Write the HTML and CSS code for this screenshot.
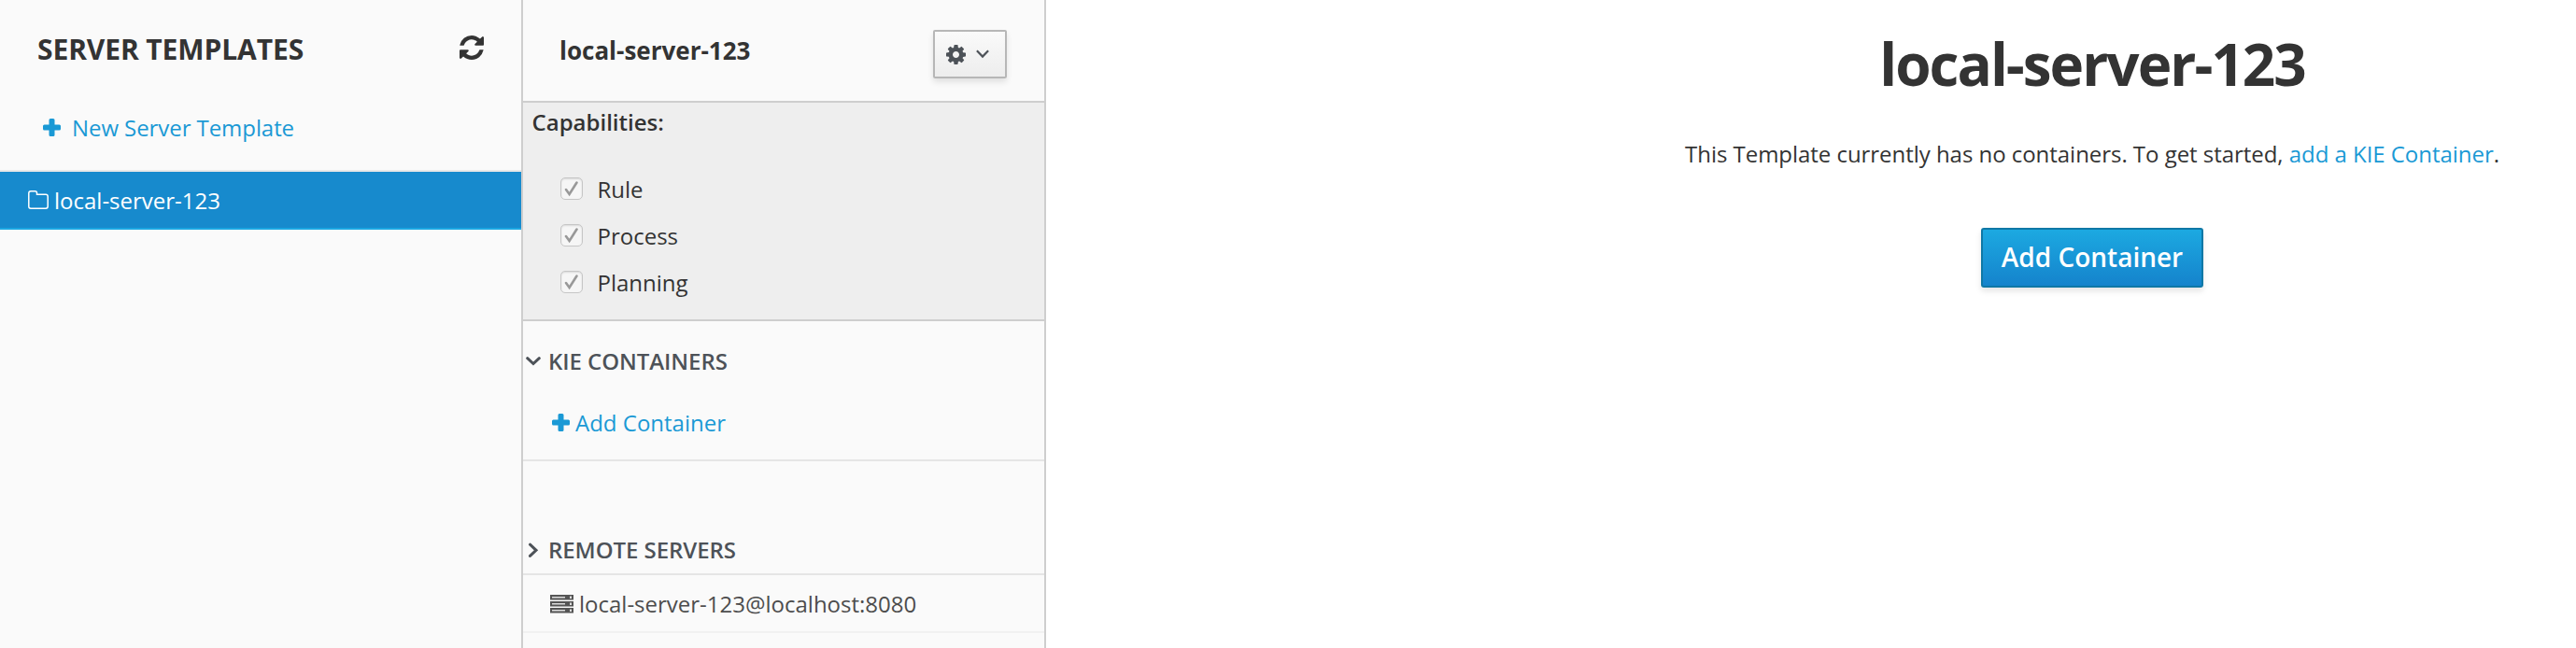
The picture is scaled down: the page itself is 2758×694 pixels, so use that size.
FILE: index.html
```html
<!DOCTYPE html>
<html lang="en">
<head>
<meta charset="utf-8">
<title>Server Templates</title>
<link rel="stylesheet" href="styles.css">
</head>
<body>
<div class="app">
  <aside class="templates">
    <header class="templates-header">
      <h2 class="templates-title">SERVER TEMPLATES</h2>
      <svg class="icon-refresh" width="26" height="26" viewBox="0 0 1536 1536"><path fill="#333" d="M1511 928q0 5-1 7-64 268-268 434.500T764 1536q-146 0-282.500-55T238 1324l-129 129q-19 19-45 19t-45-19-19-45V960q0-26 19-45t45-19h448q26 0 45 19t19 45-19 45l-137 137q71 66 161 102t187 36q134 0 250-65t186-179q11-17 53-117 8-23 30-23h192q13 0 22.500 9.500t9.500 22.500zm25-800v448q0 26-19 45t-45 19h-448q-26 0-45-19t-19-45 19-45l138-138Q969 256 768 256q-134 0-250 65T332 500q-11 17-53 117-8 23-30 23H50q-13 0-22.500-9.500T18 608v-7q65-268 270-434.500T768 0q146 0 284 55.500T1297 212l130-129q19-19 45-19t45 19 19 45z"/></svg>
    </header>
    <a class="link new-template">
      <svg width="19" height="19" viewBox="0 0 19 19"><path fill="#1a99d5" d="M8 0h3q1.500 0 1.500 1.500v5h5q1.500 0 1.500 1.500v3q0 1.500-1.500 1.500h-5v5q0 1.500-1.500 1.500h-3q-1.500 0-1.500-1.500v-5h-5Q0 12.500 0 11v-3q0-1.500 1.500-1.500h5v-5Q6.500 0 8 0z"/></svg>
      <span>New Server Template</span>
    </a>
    <div class="template-item">
      <svg width="22" height="20" viewBox="0 0 22 20"><path fill="none" stroke="#fff" stroke-width="1.500" d="M3 .8h4.500q2 0 2 2v1.500H19q2.200 0 2.200 2.200V17q0 2.200-2.200 2.200H3Q.8 19.200.8 17V3Q.8.8 3 .8z"/></svg>
      <span>local-server-123</span>
    </div>
  </aside>
  <section class="detail">
    <header class="detail-header">
      <h3 class="detail-title">local-server-123</h3>
      <button class="menu-button" type="button">
        <svg width="21" height="21" viewBox="0 0 1536 1536"><path fill="#4d5258" d="M1024 768q0-106-75-181t-181-75-181 75-75 181 75 181 181 75 181-75 75-181zm512-109v222q0 12-8 23t-20 13l-185 28q-19 54-39 91 35 50 107 138 10 12 10 25t-9 23q-27 37-99 108t-94 71q-12 0-26-9l-138-108q-44 23-91 38-16 136-29 186-7 28-36 28H657q-14 0-24.500-8.500T621 1506l-28-184q-49-16-90-37l-141 107q-10 9-25 9-14 0-25-11-126-114-165-168-7-10-7-23 0-12 8-23 15-21 51-66.500t54-70.500q-27-50-41-99L29 913q-13-2-21-12.500T0 877V655q0-12 8-23t19-13l186-28q14-46 39-92-40-57-107-138-10-12-10-24 0-10 9-23 26-36 98.500-107.500T337 135q13 0 26 10l138 107q44-23 91-38 16-136 29-186 7-28 36-28h222q14 0 24.500 8.500T915 30l28 184q49 16 90 37l142-107q9-9 24-9 13 0 25 10 129 119 165 170 7 8 7 22 0 12-8 23-15 21-51 66.500t-54 70.500q26 50 41 98l183 28q13 2 21 12.500t8 23.500z"/></svg>
        <svg width="14" height="10" viewBox="0 0 14 10"><path fill="none" stroke="#4d5258" stroke-width="2.200" d="M.9 1.300 7 7.600l6.100-6.300"/></svg>
      </button>
    </header>
    <div class="capabilities">
      <div class="capabilities-label">Capabilities:</div>
      <div class="capability"><i class="checkbox"><svg width="16" height="18" viewBox="0 0 16 18"><path fill="none" stroke="#999" stroke-width="2.600" stroke-linecap="round" d="m2 10 3.600 5L13.500 2.500"/></svg></i><span>Rule</span></div>
      <div class="capability"><i class="checkbox"><svg width="16" height="18" viewBox="0 0 16 18"><path fill="none" stroke="#999" stroke-width="2.600" stroke-linecap="round" d="m2 10 3.600 5L13.500 2.500"/></svg></i><span>Process</span></div>
      <div class="capability"><i class="checkbox"><svg width="16" height="18" viewBox="0 0 16 18"><path fill="none" stroke="#999" stroke-width="2.600" stroke-linecap="round" d="m2 10 3.600 5L13.500 2.500"/></svg></i><span>Planning</span></div>
    </div>
    <div class="containers">
      <h4 class="group-title">
        <svg width="16" height="16" viewBox="0 0 16 16"><path fill="none" stroke="#4d5258" stroke-width="3" stroke-linecap="round" d="M1.700 4.700 8 10.500l6.300-5.800"/></svg>
        <span>KIE CONTAINERS</span>
      </h4>
      <a class="link add-link">
        <svg width="19" height="19" viewBox="0 0 19 19"><path fill="#1a99d5" d="M8 0h3q1.500 0 1.500 1.500v5h5q1.500 0 1.500 1.500v3q0 1.500-1.500 1.500h-5v5q0 1.500-1.500 1.500h-3q-1.500 0-1.500-1.500v-5h-5Q0 12.500 0 11v-3q0-1.500 1.500-1.500h5v-5Q6.500 0 8 0z"/></svg>
        <span>Add Container</span>
      </a>
    </div>
    <div class="remotes">
      <h4 class="group-title">
        <svg width="16" height="16" viewBox="0 0 16 16"><path fill="none" stroke="#4d5258" stroke-width="3" stroke-linecap="round" d="M4.500 2.200 11 8.300l-6.500 6.100"/></svg>
        <span>REMOTE SERVERS</span>
      </h4>
    </div>
    <div class="remote-item">
      <svg width="25" height="20" viewBox="0 0 25 20"><g fill="#555"><path d="M0 0h25v5.500H0zM0 7h25v5.500H0zM0 14h25v5.500H0z"/></g><g fill="#ddd"><path d="M2 2h14v1.500H2zM21 1.500h2V4h-2zM2 9h14v1.500H2zM21 8.500h2V11h-2zM2 16h14v1.500H2zM21 15.500h2V18h-2z"/></g></svg>
      <span>local-server-123@localhost:8080</span>
    </div>
  </section>
  <main class="main">
    <h1 class="main-title">local-server-123</h1>
    <p class="main-text">This Template currently has no containers. To get started, <a class="link">add a KIE Container</a>.</p>
    <button class="primary-button" type="button">Add Container</button>
  </main>
</div>
</body>
</html>
```
FILE: styles.css
```css
* { box-sizing: border-box; }
html { overflow: hidden; }
body {
  margin: 0;
  height: 694px;
  overflow: hidden;
  background: #fff;
  color: #333;
  font: 24px/33px "Open Sans", sans-serif;
}
h1, h2, h3, h4, p { margin: 0; }
svg { display: block; flex: none; }
span { white-space: nowrap; }
.link { color: #1a99d5; }
.app { display: flex; height: 694px; overflow: hidden; }

.templates {
  flex: none;
  width: 560px;
  background: #fafafa;
  border-right: 2px solid #cecece;
}
.templates-header {
  display: flex;
  justify-content: space-between;
  padding: 32px 40px 0;
  height: 120px;
}
.templates-title { font-size: 30px; line-height: 41px; font-weight: 700; letter-spacing: -.1px; }
.icon-refresh { margin-top: 6px; }
.new-template { display: flex; gap: 12px; height: 62px; padding-left: 46px; letter-spacing: -.07px; }
.new-template svg { margin-top: 7px; }
.template-item {
  display: flex;
  gap: 6px;
  height: 64px;
  padding: 14px 0 0 30px;
  color: #fff;
  background: #178acd;
  border-top: 2px solid #e8e8e8;
  border-bottom: 2px solid #1ca7e2;
}
.template-item svg { margin-top: 6px; }

.detail {
  flex: none;
  width: 560px;
  background: #fafafa;
  border-right: 2px solid #cecece;
}
.detail-header {
  display: flex;
  justify-content: space-between;
  align-items: flex-start;
  height: 110px;
  padding: 32px 40px 0 39px;
  border-bottom: 2px solid #cecece;
}
.detail-title { padding-top: 4px; font-size: 26px; line-height: 36px; font-weight: 700; }
.menu-button {
  display: flex;
  align-items: center;
  gap: 11px;
  width: 79px;
  height: 52px;
  padding: 0 0 0 12px;
  border: 2px solid #b7b7b7;
  border-radius: 2px;
  background: linear-gradient(#fafafa, #ededed);
  box-shadow: 0 4px 6px rgba(3, 3, 3, .1);
}
.capabilities {
  height: 234px;
  padding-top: 4px;
  background: #eee;
  border-bottom: 2px solid #cecece;
}
.capabilities-label { padding: 0 0 39px 9.500px; font-weight: 600; }
.capability { display: flex; gap: 15.500px; height: 50px; padding-left: 40px; }
.checkbox {
  display: flex;
  width: 24px;
  height: 24px;
  margin-top: 4px;
  padding: 2px 0 0 3px;
  border: 1px solid #c6c6c6;
  border-radius: 5px;
  background: #f6f6f6;
  box-shadow: inset 0 1px 2px rgba(0, 0, 0, .12);
}
.containers {
  height: 150px;
  padding-top: 26px;
  border-bottom: 2px solid #e5e5e5;
}
.group-title {
  display: flex;
  gap: 8px;
  padding-left: 3px;
  color: #4d5258;
  font-size: 24px;
  font-weight: 600;
  letter-spacing: -.06px;
}
.group-title svg { margin-top: 9px; }
.add-link { display: flex; gap: 6px; padding: 33px 0 0 31px; }
.add-link svg { margin-top: 7px; }
.remotes {
  height: 122px;
  padding-top: 78px;
  border-bottom: 2px solid #e5e5e5;
}
.remote-item {
  display: flex;
  gap: 6px;
  height: 62px;
  padding: 14px 0 0 29px;
  color: #4d4d4d;
  border-bottom: 2px solid #f1f1f1;
}
.remote-item svg { margin-top: 7px; }

/* The main pane is wider than the window and is clipped on the right. */
.main { flex: none; width: 2240px; padding-top: 26px; text-align: center; }
.main-title { font-size: 62px; line-height: 84px; font-weight: 700; letter-spacing: -2px; }
.main-text { padding: 38px 0 63px; letter-spacing: -.04px; }
.primary-button {
  width: 238px;
  height: 64px;
  padding: 0 0 2px;
  color: #fff;
  font: 600 28px/38px "Open Sans", sans-serif;
  border: 2px solid #0f78a6;
  border-radius: 3px;
  background: linear-gradient(#1ca9e1, #1583cc);
  box-shadow: 0 4px 6px rgba(3, 3, 3, .1);
}
```
